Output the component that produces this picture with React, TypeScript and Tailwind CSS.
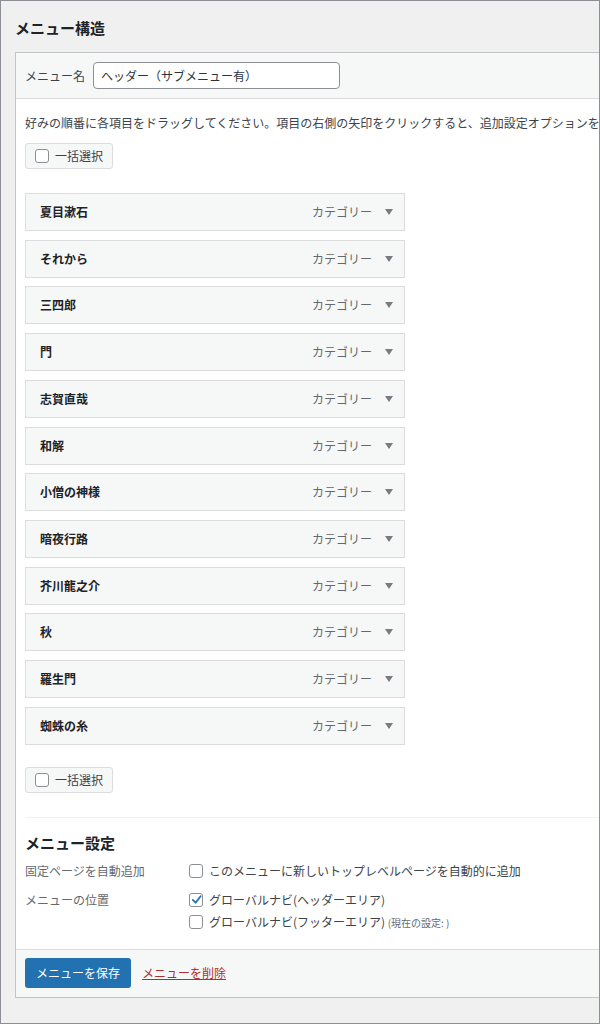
const items = [
  '夏目漱石',
  'それから',
  '三四郎',
  '門',
  '志賀直哉',
  '和解',
  '小僧の神様',
  '暗夜行路',
  '芥川龍之介',
  '秋',
  '羅生門',
  '蜘蛛の糸',
];

const Box = ({ checked = false }: { checked?: boolean }) => (
  <span className="flex h-[14px] w-[14px] shrink-0 items-center justify-center rounded-[3px] border border-[#8c8f94] bg-white">
    {checked && (
      <svg width="11" height="11" viewBox="0 0 12 12">
        <path d="M2 6.5 L5 9.5 L10.5 2.5" fill="none" stroke="#2271b1" strokeWidth="2" strokeLinecap="round" strokeLinejoin="round" />
      </svg>
    )}
  </span>
);

const BulkButton = () => (
  <div className="flex h-[26px] w-[88px] items-center gap-[6px] rounded-[3px] border border-[#dcdcde] bg-[#f6f7f7] pl-[9px] text-[12px] leading-[20px] text-[#3c434a]">
    <Box />
    <span>一括選択</span>
  </div>
);

const MenuItem = ({ title }: { title: string }) => (
  <div className="flex h-[38px] w-[380px] items-center border border-[#dcdcde] bg-[#f6f7f7] pl-[14px] pr-[11px]">
    <span className="flex-1 text-[12px] font-bold leading-[20px] text-[#1d2327]">{title}</span>
    <span className="text-[12px] leading-[20px] text-[#646970]">カテゴリー</span>
    <svg className="ml-[13px]" width="8" height="6" viewBox="0 0 8 6">
      <path d="M0 0 H8 L4 6 Z" fill="#787c82" />
    </svg>
  </div>
);

export default function App() {
  return (
    <div
      className="h-[1024px] w-[600px] overflow-hidden border border-[#8c8f94] bg-[#f0f0f1]"
      style={{ fontFamily: '"Noto Sans CJK JP", "Noto Sans", sans-serif' }}
    >
      <h2 className="pl-[14px] pt-[17px] text-[15px] font-bold leading-[20px] text-[#1d2327]">メニュー構造</h2>

      <div className="ml-[14px] mt-[14px] w-[640px] border border-[#c3c4c7] bg-white">
        <div className="flex h-[46px] items-center border-b border-[#dcdcde] bg-[#f6f7f7] pl-[9px]">
          <span className="text-[12px] leading-[20px] text-[#3c434a]">メニュー名</span>
          <div className="ml-[8px] flex h-[27px] w-[247px] items-center rounded-[4px] border border-[#8c8f94] bg-white px-[7px] text-[12px] text-[#2c3338]">
            ヘッダー（サブメニュー有）
          </div>
        </div>

        <div className="pl-[9px]">
          <p className="mt-[14px] whitespace-nowrap text-[12px] leading-[20px] text-[#3c434a]">
            好みの順番に各項目をドラッグしてください。項目の右側の矢印をクリックすると、追加設定オプションを表示します。
          </p>
          <div className="mt-[10px]">
            <BulkButton />
          </div>
          <div className="mt-[24px] flex flex-col gap-[8.73px]">
            {items.map((t) => (
              <MenuItem key={t} title={t} />
            ))}
          </div>
          <div className="mt-[22px]">
            <BulkButton />
          </div>

          <div className="mt-[24px] border-t border-[#f0f0f1]">
            <h3 className="mt-[15px] text-[15px] font-bold leading-[20px] text-[#1d2327]">メニュー設定</h3>
            <div className="mt-[8px] flex">
              <span className="w-[164px] text-[12px] leading-[20px] text-[#646970]">固定ページを自動追加</span>
              <div className="flex items-center gap-[6px] text-[12px] leading-[20px] text-[#3c434a]">
                <Box />
                <span>このメニューに新しいトップレベルページを自動的に追加</span>
              </div>
            </div>
            <div className="mt-[8px] flex pb-[15px]">
              <span className="w-[164px] text-[12px] leading-[22px] text-[#646970]">メニューの位置</span>
              <div className="flex flex-col text-[12px] leading-[22px] text-[#3c434a]">
                <div className="flex items-center gap-[6px]">
                  <Box checked />
                  <span>グローバルナビ(ヘッダーエリア)</span>
                </div>
                <div className="flex items-center gap-[6px]">
                  <Box />
                  <span>
                    グローバルナビ(フッターエリア) <span className="text-[10px] text-[#646970]">(現在の設定: )</span>
                  </span>
                </div>
              </div>
            </div>
          </div>
        </div>

        <div className="flex h-[48px] items-center gap-[11px] border-t border-[#dcdcde] bg-[#f6f7f7] pl-[9px]">
          <div className="flex h-[30px] items-center rounded-[3px] bg-[#2271b1] px-[11px] text-[12px] leading-[20px] text-white">
            メニューを保存
          </div>
          <span className="text-[12px] leading-[20px] text-[#b32d2e] underline">メニューを削除</span>
        </div>
      </div>
    </div>
  );
}
